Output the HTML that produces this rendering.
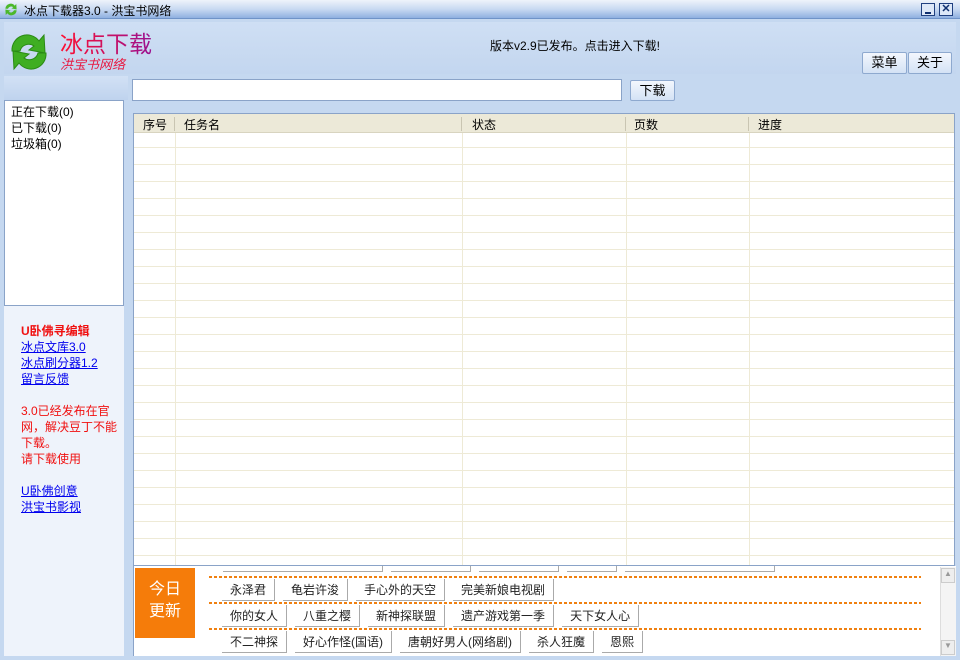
<!DOCTYPE html>
<html><head><meta charset="utf-8"><style>
*{margin:0;padding:0;box-sizing:border-box}
body{width:960px;height:660px;overflow:hidden;background:#c5d8f0;font-family:"Liberation Sans","Noto Sans CJK SC",sans-serif;font-size:12px;position:relative;color:#000}
.a{position:absolute}
.title{left:0;top:0;width:960px;height:19px;background:linear-gradient(#eef3fb,#c9daf2 50%,#8fb0e0);border-bottom:1px solid #6f93c8}
.btn{background:linear-gradient(#f3f7fd,#d4e2f5);border:1px solid #8ea9cf;border-radius:2px;font-size:13px;text-align:center}
.tb{left:133px;top:113px;width:822px;height:453px;background:#fff;border:1px solid #8aa3c8;
background-image:repeating-linear-gradient(to bottom,transparent 0,transparent 16px,#eeead6 16px,#eeead6 17px)}
.vl{top:133px;width:1px;height:432px;background:#eeead6}
.hd{left:134px;top:114px;width:820px;height:19px;background:#ece9d8;border-bottom:1px solid #d8d4c0}
.hd span{position:absolute;top:2px}
.hd i{position:absolute;top:3px;width:1px;height:14px;background:#c9c5b2}
a{color:#0000ee;text-decoration:underline}
.tag{display:inline-block;border-right:1px solid #aaa;border-bottom:1px solid #aaa;padding:0 8px;height:22px;line-height:22px;margin-right:8px;font-size:12px;color:#222}
.dash{left:209px;width:712px;height:2px;background:repeating-linear-gradient(90deg,#f08010 0,#f08010 3px,transparent 3px,transparent 5px)}
</style></head><body>
<div class="a title"></div>
<svg class="a" style="left:3px;top:2px" width="16" height="15" viewBox="0 0 40 40"><path d="M5 18 A14 14 0 0 1 30 10 L34 5 L35 20 L21 17 L26 14 A9 9 0 0 0 12 18Z" fill="#4bb82a"/><path d="M35 22 A14 14 0 0 1 10 30 L6 35 L5 20 L19 23 L14 26 A9 9 0 0 0 28 22Z" fill="#4bb82a"/></svg>
<div class="a" style="left:24px;top:2px;font-size:12px">冰点下载器3.0 - 洪宝书网络</div>
<div class="a" style="left:921px;top:3px;width:14px;height:13px;border:1px solid #204080;background:#dde8f8"><div style="position:absolute;left:3px;top:8px;width:6px;height:2px;background:#103070"></div></div>
<div class="a" style="left:939px;top:3px;width:14px;height:13px;border:1px solid #204080;background:#dde8f8;font-size:11px;line-height:11px;text-align:center;font-weight:bold;color:#103070">✕</div>
<div class="a" style="left:4px;top:22px;width:952px;height:52px;background:linear-gradient(#cfdff4,#c3d6ef)"></div>
<svg class="a" style="left:9px;top:31px" width="40" height="42" viewBox="0 0 40 40"><path d="M3 19 A15 15 0 0 1 30 9 L35 3 L36 21 L20 18 L25 14 A9 9 0 0 0 11 19Z" fill="#3fae22" stroke="#2a8a15" stroke-width="1"/><path d="M37 21 A15 15 0 0 1 10 31 L5 37 L4 19 L20 22 L15 26 A9 9 0 0 0 29 21Z" fill="#3fae22" stroke="#2a8a15" stroke-width="1"/></svg>
<div class="a" style="left:60px;top:31px;font-size:23px;line-height:26px;color:#e81840;background:linear-gradient(90deg,#ff1030,#9a1090);-webkit-background-clip:text;background-clip:text;-webkit-text-fill-color:transparent">冰点下载</div>
<div class="a" style="left:60px;top:54px;font-size:13px;font-style:italic;color:#e81840">洪宝书网络</div>
<div class="a" style="left:490px;top:37px;font-size:12px">版本v2.9已发布。点击进入下载!</div>
<div class="a btn" style="left:862px;top:52px;width:45px;height:22px;line-height:20px">菜单</div>
<div class="a btn" style="left:908px;top:52px;width:44px;height:22px;line-height:20px">关于</div>
<div class="a" style="left:4px;top:76px;width:124px;height:24px;background:linear-gradient(#d2e1f5,#bfd3ee)"></div>
<div class="a" style="left:132px;top:79px;width:490px;height:22px;background:#fff;border:1px solid #8aa3c8"></div>
<div class="a btn" style="left:630px;top:80px;width:45px;height:21px;line-height:19px">下载</div>
<div class="a" style="left:4px;top:100px;width:120px;height:206px;background:#fff;border:1px solid #8aa3c8;padding:3px 6px;line-height:16px;font-size:12px">正在下载(0)<br>已下载(0)<br>垃圾箱(0)</div>
<div class="a" style="left:4px;top:306px;width:120px;height:350px;background:#eef3fb"></div>
<div class="a" style="left:124px;top:100px;width:5px;height:556px;background:#c5d8f0"></div>
<div class="a" style="left:21px;top:323px;line-height:16px;font-size:12px">
<b style="color:#f01010">U卧佛寻编辑</b><br><a>冰点文库3.0</a><br><a>冰点刷分器1.2</a><br><a>留言反馈</a><br><br>
<span style="color:#f01010;display:inline-block;width:100px">3.0已经发布在官网，解决豆丁不能下载。<br>请下载使用</span><br><br><a>U卧佛创意</a><br><a>洪宝书影视</a></div>
<div class="a tb"></div>
<div class="a vl" style="left:175px"></div><div class="a vl" style="left:462px"></div><div class="a vl" style="left:626px"></div><div class="a vl" style="left:749px"></div>
<div class="a hd"><span style="left:9px">序号</span><i style="left:40px"></i><span style="left:50px">任务名</span><i style="left:327px"></i><span style="left:338px">状态</span><i style="left:491px"></i><span style="left:500px">页数</span><i style="left:614px"></i><span style="left:624px">进度</span></div>
<div class="a" style="left:133px;top:566px;width:823px;height:90px;background:#fff;border-left:1px solid #8aa3c8;overflow:hidden">
<div class="a" style="left:89px;top:-16px;white-space:nowrap"><span class="tag" style="width:160px"></span><span class="tag" style="width:80px"></span><span class="tag" style="width:80px"></span><span class="tag" style="width:50px"></span><span class="tag" style="width:150px"></span></div></div>
<div class="a" style="left:135px;top:568px;width:60px;height:70px;background:#f57c0a;color:#fff;font-size:16px;line-height:22px;text-align:center;padding-top:11px">今日<br>更新</div>
<div class="a dash" style="top:576px"></div><div class="a dash" style="top:602px"></div><div class="a dash" style="top:628px"></div>
<div class="a" style="left:222px;top:579px"><span class="tag">永泽君</span><span class="tag">龟岩许浚</span><span class="tag">手心外的天空</span><span class="tag">完美新娘电视剧</span></div>
<div class="a" style="left:222px;top:605px"><span class="tag">你的女人</span><span class="tag">八重之樱</span><span class="tag">新神探联盟</span><span class="tag">遗产游戏第一季</span><span class="tag">天下女人心</span></div>
<div class="a" style="left:222px;top:631px"><span class="tag">不二神探</span><span class="tag">好心作怪(国语)</span><span class="tag">唐朝好男人(网络剧)</span><span class="tag">杀人狂魔</span><span class="tag">恩熙</span></div>
<div class="a" style="left:940px;top:567px;width:16px;height:89px;background:#f4f4f4;border-left:1px solid #ddd"></div>
<div class="a" style="left:941px;top:568px;width:14px;height:15px;border:1px solid #ccc;background:#eee;font-size:8px;color:#999;text-align:center">▲</div>
<div class="a" style="left:941px;top:640px;width:14px;height:15px;border:1px solid #ccc;background:#eee;font-size:8px;color:#999;text-align:center">▼</div>
</body></html>
